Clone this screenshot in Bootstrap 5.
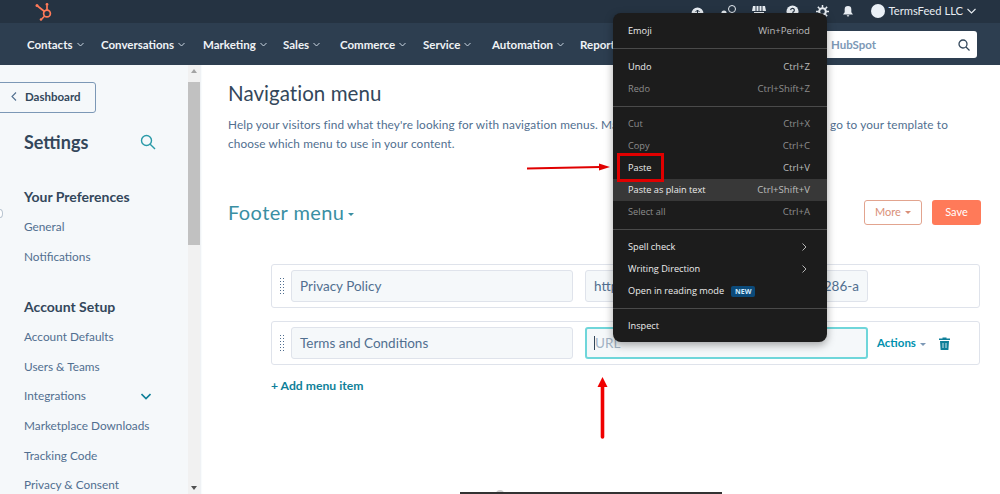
<!DOCTYPE html>
<html lang="en">
<head>
<meta charset="utf-8">
<title>Navigation menu</title>
<link href="https://cdn.jsdelivr.net/npm/bootstrap@5.3.0/dist/css/bootstrap.min.css" rel="stylesheet">
<style>
html,body{height:494px;overflow:hidden;background:#fff}
body{font-family:Lato,"Liberation Sans",sans-serif;color:#33475b;position:relative}
.topstrip{height:23px;background:#253342;color:#e8edf2;font-size:11.2px;padding-left:34px;padding-right:24px}
.icn{display:block;flex:none}
.navstrip{height:42px;background:#2d3e50;padding:1px 0 0 27px}
.navlink{color:#f0f3f6;font-size:11.5px;font-weight:700;white-space:nowrap;display:flex;align-items:center;gap:4px}
.nav-caret{width:7px;height:5px;flex:none}
.searchbox{position:absolute;left:800px;top:31px;width:177px;height:27px;background:#fff;border-radius:3px;color:#7c98b6;font-size:11.5px;font-weight:700;padding:0 7px 0 31px}
.shell{height:429px}
.sidepane{width:188px;flex:none;background:#f5f8fa;padding:17px 0 0 24px;overflow:hidden}
.dashbtn{margin-left:-28px;width:100px;height:31px;border:1px solid #7c98b6;border-radius:3px;background:#f5f8fa;font-size:11.5px;font-weight:700;padding:0 0 2px 14px;gap:8px;color:#33475b}
.settitle{font-size:18px;font-weight:700;margin:16px 0 0;line-height:26px;width:132px}
.sechead{font-size:14px;font-weight:700;line-height:18px;margin:0}
.sideitem{font-size:11.8px;line-height:29.6px;height:29.6px;color:#516f90;width:125px;white-space:nowrap}
.rail{width:12px;flex:none;background:#f1f1f1}
.railthumb{height:163px;background:#c1c1c1;margin-top:9px}
.railtri{width:0;height:0;border-left:3px solid transparent;border-right:3px solid transparent}
.contentpane{flex:1;padding:0 19px 0 28px;box-shadow:inset 2px 0 2px -1px #e9eef2;min-width:0}
.pagetitle{font-size:20.5px;font-weight:400;line-height:28px;margin:14px 0 0;letter-spacing:.05px}
.intro{font-size:11.8px;line-height:19px;color:#516f90;margin:8px 0 0;width:720px;letter-spacing:.12px}
.footerrow{margin-top:46px;height:26px}
.footname{font-size:20px;color:#3a8fa3;letter-spacing:.4px;line-height:26px}
.caretsm{display:inline-block;border-left:3px solid transparent;border-right:3px solid transparent;border-top:3px solid currentColor;vertical-align:middle;margin-left:4px}
.btnmore{width:58px;height:25px;border:1px solid #e2a48f;border-radius:3px;color:#d98f78;font-size:11px;background:#fff;padding:0}
.btnsave{width:49px;height:25px;border:0;border-radius:3px;background:#ff7a59;color:#fff;font-size:11px;padding:0;margin-left:10px}
.menublock{margin:39px 0 0 43px;width:709px}
.menurow{height:44px;border:1px solid #dfe3eb;border-radius:3px;background:#fff;margin-bottom:13px;padding:0 0 0 7px}
.grip{width:6px;height:18px;flex:none;margin-right:6px;background-image:radial-gradient(circle,#516f90 .8px,transparent 1px);background-size:3px 3px}
.fieldbox{width:282px;height:32px;flex:none;border:1px solid #dfe3eb;border-radius:3px;background:#f5f8fa;color:#516f90;font-size:13.5px;padding:0 8px;line-height:30px;overflow:hidden;white-space:nowrap}
.urlbox{width:283px;margin-left:12px}
.urlfocus{border:2px solid #6fd6da;line-height:28px;color:#a2b3c4;background:#f5f8fa;padding-left:7px}
.cursorbar{display:inline-block;width:1px;height:14px;background:#33475b;vertical-align:-2px}
.actlabel{color:#0091ae;font-size:11.5px;font-weight:700;margin-left:9px}
.addlink{color:#0f7f99;font-size:12.2px;font-weight:700;margin-top:2px;line-height:16px}
.ctxmenu{position:absolute;left:613px;top:13px;width:214px;height:329px;background:#1c1c1c;border-radius:8px;box-shadow:0 3px 9px rgba(0,0,0,.35);color:#ececec;font-family:"Open Sans","Liberation Sans",sans-serif;font-size:9.2px;padding:7px 0;z-index:3}
.ctxrow{height:22px;padding:0 17px 0 15px;white-space:nowrap}
.ctxrow.dimmed{color:#8d8d8d}
.ctxrow.hot{background:#383838}
.ctxrule{height:1px;background:#4a4a4a;margin:6px 0}
.ctxrule.firstrule{margin-bottom:7px}
.keyhint{color:#bdbdbd;font-size:9.6px}
.dimmed .keyhint{color:#8d8d8d}
.arrowslot{margin-right:3px}
.newtag{background:#0b4a7a;color:#d2eafc;font-size:7px;font-weight:700;border-radius:2px;padding:1px 4px;margin-left:7px;line-height:9px}
.pastebox{position:absolute;left:617px;top:153px;width:47px;height:29px;border:3px solid #e00000;z-index:4}
.overlayarrow{position:absolute;z-index:4}
.bottombar{position:absolute;left:460px;top:492px;width:262px;height:2px;background:#333;z-index:2}
.bottomdot{position:absolute;left:496px;top:490px;width:8px;height:4px;border-radius:4px 4px 0 0;background:#cfcfcf;z-index:1}
.edgedot{position:absolute;left:-3px;top:209px;width:6px;height:9px;border:1px solid #b8c4d0;border-radius:50%;background:#fff}
</style>
</head>
<body>
<header class="topstrip d-flex align-items-center">
  <svg class="icn" width="20" height="20" viewBox="0 0 20 20" fill="none" stroke="#ff7a59" stroke-width="1.7"><circle cx="13" cy="11.5" r="3.4"/><path d="M13 8V3.5M10.5 9.500L3.5 4M10.7 14l-3 3"/><circle cx="13" cy="2.5" r="1.4" fill="#ff7a59" stroke="none"/><circle cx="3" cy="3.5" r="1.5" fill="#ff7a59" stroke="none"/><circle cx="7" cy="17.5" r="1.3" fill="#ff7a59" stroke="none"/></svg>
  <div class="d-flex align-items-center ms-auto">
    <svg class="icn" style="margin-right:17px" width="13" height="13" viewBox="0 0 13 13"><path d="M.5 8.500a6 6 0 0 1 12 0V12H.5z" fill="#e8edf2"/><path d="M6.500 9V5M4.500 7l2-2 2 2" stroke="#253342" fill="none"/></svg>
    <svg class="icn" style="margin-right:15px" width="16" height="13" viewBox="0 0 16 13"><circle cx="3" cy="8" r="2.600" fill="#e8edf2"/><circle cx="11" cy="4" r="3.500" fill="none" stroke="#e8edf2"/></svg>
    <svg class="icn" style="margin-right:20px" width="14" height="13" viewBox="0 0 14 13"><path d="M1 1h12l1 5H0zM2 7h10v5H2z" fill="#e8edf2"/><path d="M4 1v5M7 1v5M10 1v5" stroke="#253342"/></svg>
    <svg class="icn" style="margin-right:17px" width="13" height="13" viewBox="0 0 14 14"><circle cx="7" cy="7" r="6.500" fill="#e8edf2"/><path d="M5 5.500a2 2 0 1 1 2.500 2V9" stroke="#253342" stroke-width="1.300" fill="none"/></svg>
    <svg class="icn" style="margin-right:14px" width="13" height="13" viewBox="0 0 14 14"><circle cx="7" cy="7" r="3.600" fill="none" stroke="#e8edf2" stroke-width="2.200"/><path d="M7 0v3M7 11v3M0 7h3M11 7h3M2 2l2 2M10 10l2 2M12 2l-2 2M4 10l-2 2" stroke="#e8edf2" stroke-width="1.600"/></svg>
    <svg class="icn" style="margin-right:18px" width="10" height="13" viewBox="0 0 12 13" fill="#e8edf2"><path d="M6 0a4 4 0 0 1 4 4v3.500L12 10H0l2-2.500V4a4 4 0 0 1 4-4zM4.500 11h3a1.500 1.500 0 0 1-3 0z"/></svg>
    <svg class="icn" style="margin-right:4px" width="14" height="14" viewBox="0 0 14 14"><circle cx="7" cy="7" r="7" fill="#eaf0f6"/></svg>
    <span>TermsFeed LLC</span>
    <svg class="icn" style="margin-left:4px" width="9" height="6" viewBox="0 0 9 6" fill="none" stroke="#e8edf2" stroke-width="1.100"><path d="M.5 1l4 4 4-4"/></svg>
  </div>
</header>
<nav class="navstrip d-flex align-items-center">
  <span class="navlink" style="width:74px">Contacts<svg class="nav-caret" viewBox="0 0 7 5" fill="none" stroke="#cbd6e2"><path d="M.5 1l3 3 3-3"/></svg></span>
  <span class="navlink" style="width:102px">Conversations<svg class="nav-caret" viewBox="0 0 7 5" fill="none" stroke="#cbd6e2"><path d="M.5 1l3 3 3-3"/></svg></span>
  <span class="navlink" style="width:80px">Marketing<svg class="nav-caret" viewBox="0 0 7 5" fill="none" stroke="#cbd6e2"><path d="M.5 1l3 3 3-3"/></svg></span>
  <span class="navlink" style="width:57px">Sales<svg class="nav-caret" viewBox="0 0 7 5" fill="none" stroke="#cbd6e2"><path d="M.5 1l3 3 3-3"/></svg></span>
  <span class="navlink" style="width:83px">Commerce<svg class="nav-caret" viewBox="0 0 7 5" fill="none" stroke="#cbd6e2"><path d="M.5 1l3 3 3-3"/></svg></span>
  <span class="navlink" style="width:69px">Service<svg class="nav-caret" viewBox="0 0 7 5" fill="none" stroke="#cbd6e2"><path d="M.5 1l3 3 3-3"/></svg></span>
  <span class="navlink" style="width:88px">Automation<svg class="nav-caret" viewBox="0 0 7 5" fill="none" stroke="#cbd6e2"><path d="M.5 1l3 3 3-3"/></svg></span>
  <span class="navlink">Report</span>
</nav>
<div class="searchbox d-flex align-items-center justify-content-between">
  <span>HubSpot</span>
  <svg class="icn" width="12" height="12" viewBox="0 0 12 12" fill="none" stroke="#33475b" stroke-width="1.300"><circle cx="5" cy="5" r="4"/><path d="M8 8l3.500 3.500"/></svg>
</div>
<div class="shell d-flex">
  <aside class="sidepane">
    <div class="dashbtn d-flex align-items-center">
      <svg class="icn" width="6" height="9" viewBox="0 0 6 9" fill="none" stroke="#516f90" stroke-width="1.100"><path d="M5 .5l-4 4 4 4"/></svg>
      <span>Dashboard</span>
    </div>
    <div class="settitle d-flex align-items-center justify-content-between">
      <span>Settings</span>
      <svg class="icn" width="16" height="16" viewBox="0 0 16 16" fill="none" stroke="#2a9aa8" stroke-width="1.400"><circle cx="6.500" cy="6.500" r="5"/><path d="M10.200 10.200L15 15"/></svg>
    </div>
    <h3 class="sechead" style="margin-top:33px">Your Preferences</h3>
    <div class="sideitem" style="margin-top:6px">General</div>
    <div class="sideitem">Notifications</div>
    <h3 class="sechead" style="margin-top:27px">Account Setup</h3>
    <div class="sideitem" style="margin-top:6px">Account Defaults</div>
    <div class="sideitem">Users &amp; Teams</div>
    <div class="sideitem d-flex align-items-center justify-content-between" style="width:127px"><span>Integrations</span><svg class="icn" width="10" height="7" viewBox="0 0 10 7" fill="none" stroke="#0f7f99" stroke-width="1.600"><path d="M.5 1l4.500 4.500L9.500 1"/></svg></div>
    <div class="sideitem">Marketplace Downloads</div>
    <div class="sideitem">Tracking Code</div>
    <div class="sideitem">Privacy &amp; Consent</div>
  </aside>
  <div class="rail d-flex flex-column align-items-center">
    <div class="railtri mt-1" style="border-bottom:4px solid #a3a3a3"></div>
    <div class="railthumb w-100"></div>
    <div class="railtri mt-auto mb-1" style="border-top:4px solid #505050"></div>
  </div>
  <main class="contentpane">
    <h1 class="pagetitle">Navigation menu</h1>
    <div class="intro">
      <div class="d-flex justify-content-between"><span>Help your visitors find what they're looking for with navigation menus. Mar</span><span>u go to your template to</span></div>
      <div>choose which menu to use in your content.</div>
    </div>
    <div class="footerrow d-flex align-items-center">
      <span class="footname">Footer menu<span class="caretsm"></span></span>
      <button class="btnmore ms-auto" type="button">More<span class="caretsm"></span></button>
      <button class="btnsave" type="button">Save</button>
    </div>
    <div class="menublock">
      <div class="menurow d-flex align-items-center">
        <span class="grip"></span>
        <div class="fieldbox">Privacy Policy</div>
        <div class="fieldbox urlbox d-flex justify-content-between"><span>http</span><span>286-a</span></div>
      </div>
      <div class="menurow d-flex align-items-center">
        <span class="grip"></span>
        <div class="fieldbox">Terms and Conditions</div>
        <div class="fieldbox urlbox urlfocus"><span class="cursorbar"></span>URL</div>
        <span class="actlabel">Actions<span class="caretsm" style="color:#7c98b6"></span></span>
        <svg class="icn" style="margin-left:13px" width="11" height="13" viewBox="0 0 11 13"><path d="M3.500 1.500V.500h4v1H11v1.500H0V1.500zM1 4h9l-.6 9H1.600z" fill="#0f7f99"/><path d="M4 6v5M7 6v5" stroke="#fff" stroke-width=".8"/></svg>
      </div>
      <div class="addlink">+ Add menu item</div>
    </div>
  </main>
</div>

<div class="ctxmenu" role="menu">
  <div class="ctxrow d-flex align-items-center justify-content-between"><span>Emoji</span><span class="keyhint">Win+Period</span></div>
  <div class="ctxrule firstrule"></div>
  <div class="ctxrow d-flex align-items-center justify-content-between"><span>Undo</span><span class="keyhint">Ctrl+Z</span></div>
  <div class="ctxrow dimmed d-flex align-items-center justify-content-between"><span>Redo</span><span class="keyhint">Ctrl+Shift+Z</span></div>
  <div class="ctxrule"></div>
  <div class="ctxrow dimmed d-flex align-items-center justify-content-between"><span>Cut</span><span class="keyhint">Ctrl+X</span></div>
  <div class="ctxrow dimmed d-flex align-items-center justify-content-between"><span>Copy</span><span class="keyhint">Ctrl+C</span></div>
  <div class="ctxrow d-flex align-items-center justify-content-between"><span>Paste</span><span class="keyhint">Ctrl+V</span></div>
  <div class="ctxrow hot d-flex align-items-center justify-content-between"><span>Paste as plain text</span><span class="keyhint">Ctrl+Shift+V</span></div>
  <div class="ctxrow dimmed d-flex align-items-center justify-content-between"><span>Select all</span><span class="keyhint">Ctrl+A</span></div>
  <div class="ctxrule"></div>
  <div class="ctxrow d-flex align-items-center justify-content-between"><span>Spell check</span><svg class="icn arrowslot" width="5" height="8" viewBox="0 0 5 8" fill="none" stroke="#b5b5b5"><path d="M.5.500l3.500 3.500-3.500 3.500"/></svg></div>
  <div class="ctxrow d-flex align-items-center justify-content-between"><span>Writing Direction</span><svg class="icn arrowslot" width="5" height="8" viewBox="0 0 5 8" fill="none" stroke="#b5b5b5"><path d="M.5.500l3.500 3.500-3.500 3.500"/></svg></div>
  <div class="ctxrow d-flex align-items-center"><span>Open in reading mode</span><span class="newtag">NEW</span></div>
  <div class="ctxrule"></div>
  <div class="ctxrow d-flex align-items-center"><span>Inspect</span></div>
</div>

<div class="pastebox"></div>
<svg class="overlayarrow" style="left:526px;top:162px" width="84" height="10" viewBox="0 0 84 10"><path d="M1 6.500L74 5" stroke="#e00000" stroke-width="1.800"/><path d="M73 1.500L84 5l-11 3.500z" fill="#e00000"/></svg>
<svg class="overlayarrow" style="left:597px;top:376px" width="11" height="63" viewBox="0 0 11 63"><path d="M5.500 10V61" stroke="#f00000" stroke-width="3.600" stroke-linecap="round"/><path d="M.5 11L5.500 1l5 10z" fill="#f00000"/></svg>
<div class="bottomdot"></div>
<div class="bottombar"></div>
<div class="edgedot"></div>
</body>
</html>
